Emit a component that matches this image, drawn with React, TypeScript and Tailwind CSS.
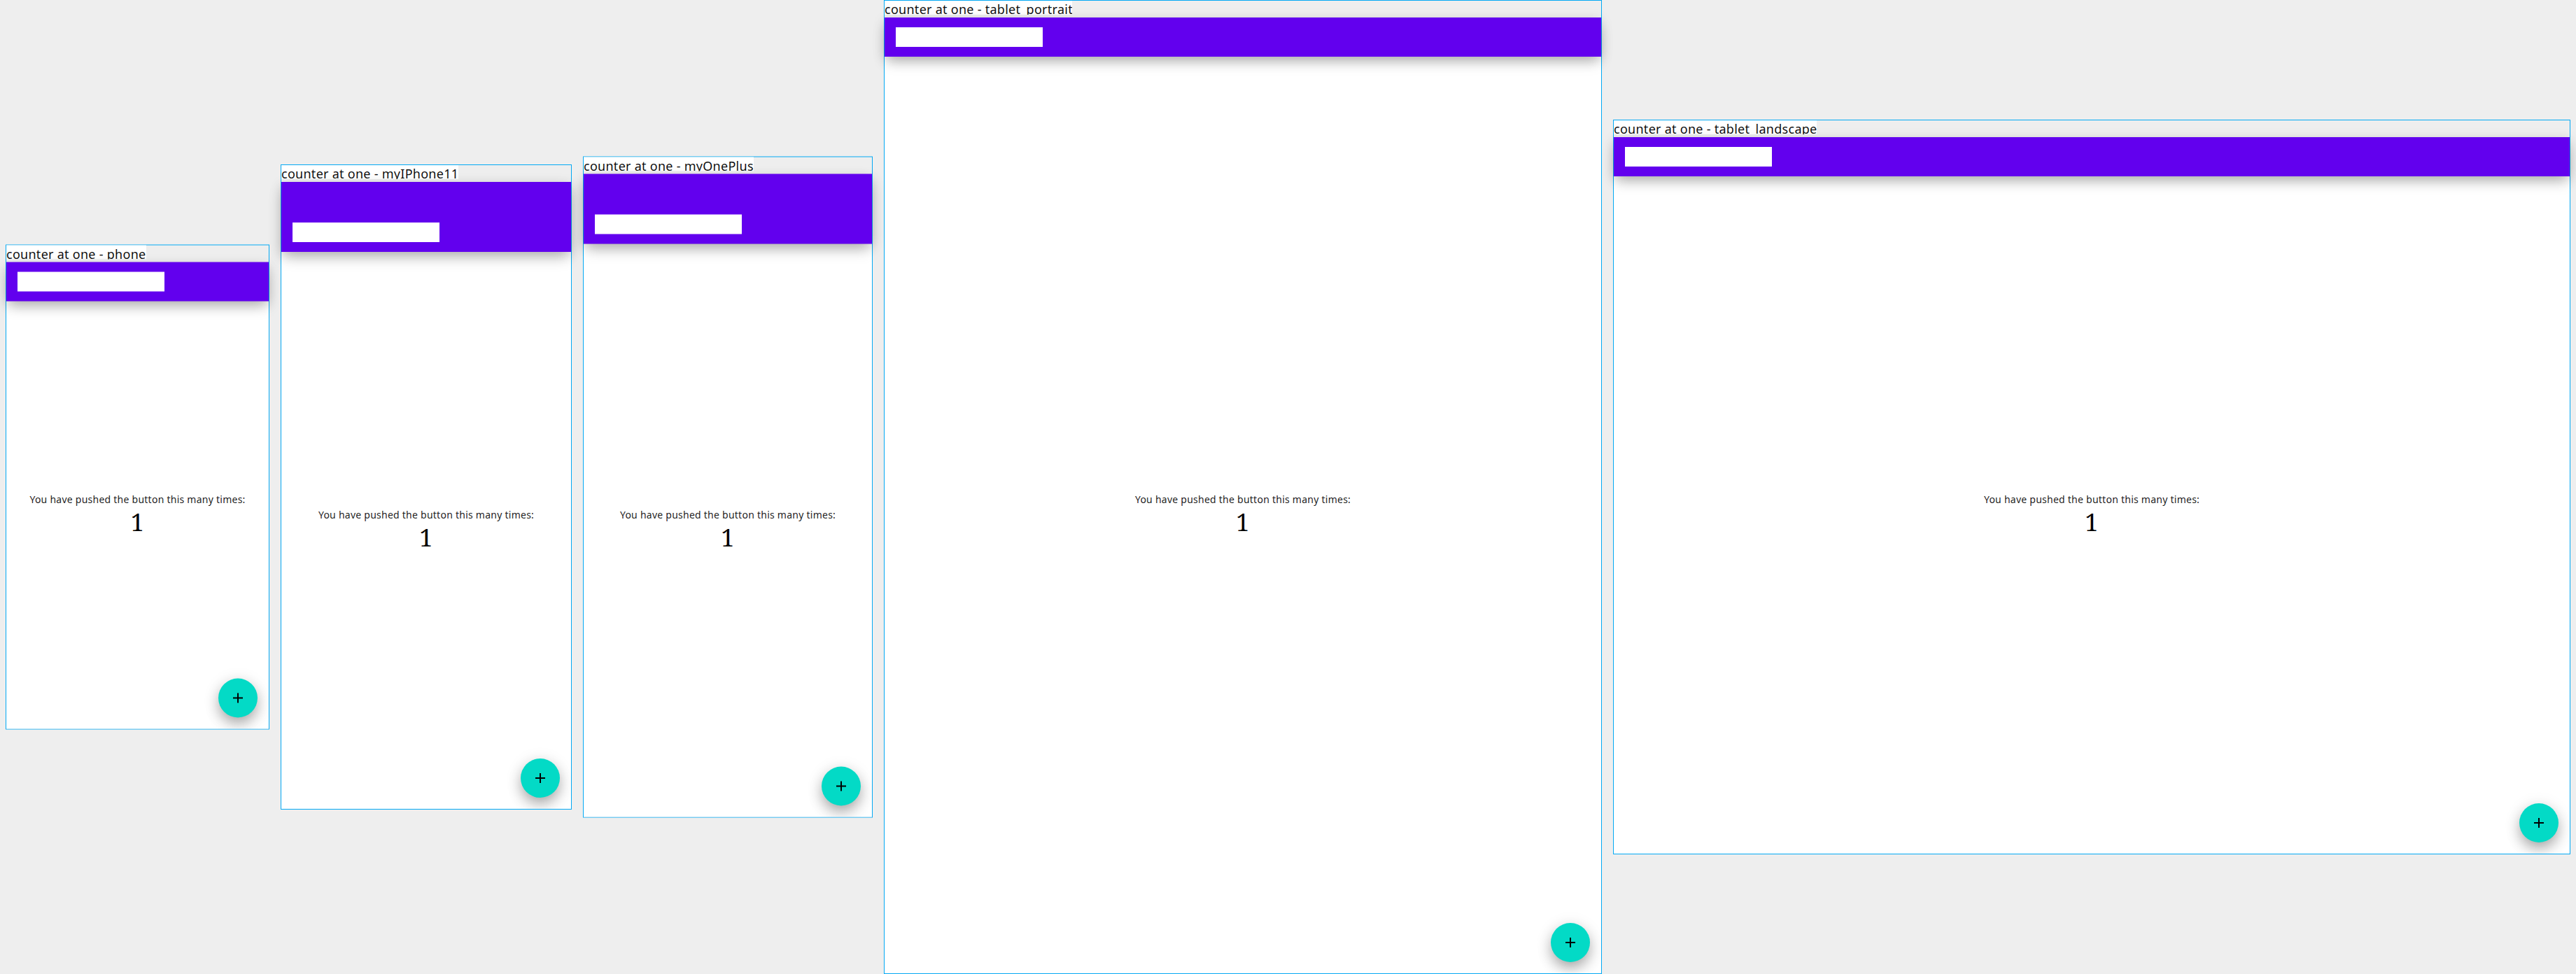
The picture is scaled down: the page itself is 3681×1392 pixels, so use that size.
type Device = {
  name: string;
  frame: string;
  bar: string;
  label: string;
  caption: string;
  count: string;
};

const devices: Device[] = [
  { name: "phone", frame: "w-[377px] h-[693px] translate-y-[0.5px] mt-[-1px]", bar: "h-14", label: "w-[199.5px]", caption: "pt-0", count: "relative -top-[0.5px]" },
  { name: "myIPhone11", frame: "w-[416px] h-[922px]", bar: "h-[100px]", label: "w-[253px]", caption: "pt-px -mb-px", count: "" },
  { name: "myOnePlus", frame: "w-[414px] h-[945px] translate-y-[0.5px] mt-[-1px]", bar: "h-[100px]", label: "w-[243px]", caption: "pt-0", count: "relative -top-[0.5px]" },
  { name: "tablet_portrait", frame: "w-[1026px] h-[1392px]", bar: "h-14", label: "w-[268px]", caption: "pt-px -mb-px", count: "" },
  { name: "tablet_landscape", frame: "w-[1368px] h-[1050px]", bar: "h-14", label: "w-[290px]", caption: "pt-px -mb-px", count: "" },
];

function AppBar({ height }: { height: string }) {
  return (
    <div
      className={`relative z-10 flex shrink-0 items-end bg-[#6200ee] px-4 pb-[14.5px] shadow-[0_10px_20px_-4px_rgba(0,0,0,0.25),0_4px_17px_0_rgba(0,0,0,0.13)] ${height}`}
    >
      <div className="h-[27.5px] w-[209.7px] bg-white" />
    </div>
  );
}

function DeviceFrame({ name, frame, bar, label, caption, count }: Device) {
  return (
    <section className={`flex shrink-0 flex-col border border-[#03a9f4] ${frame}`}>
      <div className="h-6 shrink-0">
        <div
          className={`h-5 overflow-hidden whitespace-nowrap bg-white text-[18px] leading-[24px] tracking-[0.27px] text-black/95 ${label}`}
        >
          counter at one - {name}
        </div>
      </div>
      <AppBar height={bar} />
      <main className="relative flex min-h-0 flex-1 flex-col items-center justify-center overflow-hidden bg-white">
        <p className={`text-[14px] leading-[20px] tracking-[0.25px] text-black/90 ${caption}`}>
          You have pushed the button this many times:
        </p>
        <p className={`font-['Noto_Serif',serif] text-[34px] leading-[46px] tracking-[0.25px] text-black ${count}`}>1</p>
        <button className="absolute bottom-4 right-4 flex size-14 items-center justify-center rounded-full bg-[#03dac6] shadow-[0_10px_20px_-2px_rgba(0,0,0,0.3),0_4px_24px_0_rgba(0,0,0,0.12)]">
          <svg viewBox="0 0 24 24" className="size-6" fill="#000">
            <path d="M19 13h-6v6h-2v-6H5v-2h6V5h2v6h6v2z" />
          </svg>
        </button>
      </main>
    </section>
  );
}

export default function App() {
  return (
    <div className="flex h-[1392px] w-[3681px] items-center gap-4 overflow-hidden bg-[#eeeeee] px-2 font-['Noto_Sans',sans-serif]">
      {devices.map((d) => (
        <DeviceFrame key={d.name} {...d} />
      ))}
    </div>
  );
}
